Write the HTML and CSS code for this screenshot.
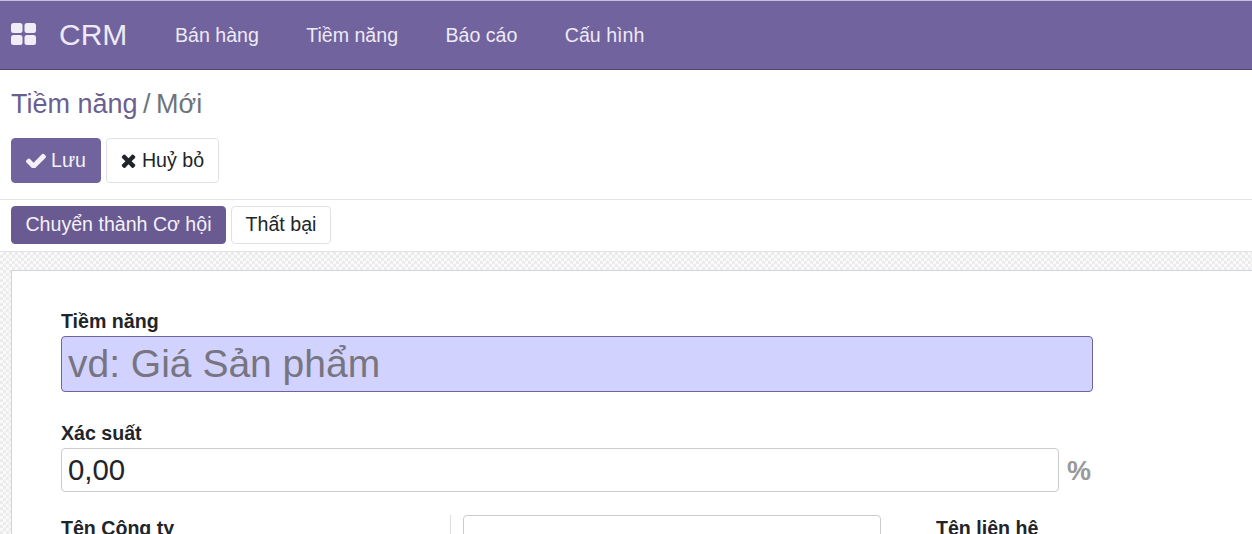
FILE: index.html
```html
<!DOCTYPE html>
<html lang="vi">
<head>
<meta charset="utf-8">
<title>CRM</title>
<link rel="stylesheet" href="styles.css">
</head>
<body>
<nav class="navbar">
  <svg class="apps-icon" viewBox="0 0 25 22" aria-hidden="true">
    <rect x="0" y="0" width="11.5" height="10" rx="2.5"/>
    <rect x="13.5" y="0" width="11.5" height="10" rx="2.5"/>
    <rect x="0" y="12" width="11.5" height="10" rx="2.5"/>
    <rect x="13.5" y="12" width="11.5" height="10" rx="2.5"/>
  </svg>
  <span class="brand">CRM</span>
  <ul class="menu">
    <li>Bán hàng</li>
    <li>Tiềm năng</li>
    <li>Báo cáo</li>
    <li>Cấu hình</li>
  </ul>
</nav>
<header class="control">
  <div class="breadcrumb"><span class="crumb-link">Tiềm năng</span><span class="crumb-sep">/</span><span class="crumb-active">Mới</span></div>
  <div class="actions">
    <button class="btn btn-save"><svg class="btn-icon" viewBox="128 280 1543 1150"><path d="M1671 566q0 40-28 68l-724 724-136 136q-28 28-68 28t-68-28l-136-136-362-362q-28-28-28-68t28-68l136-136q28-28 68-28t68 28l294 295 656-657q28-28 68-28t68 28l136 136q28 28 28 68z"/></svg>Lưu</button>
    <button class="btn btn-cancel"><svg class="btn-icon x-icon" viewBox="294 238 1196 1316"><path d="M1490 1322q0 40-28 68l-136 136q-28 28-68 28t-68-28l-294-294-294 294q-28 28-68 28t-68-28l-136-136q-28-28-28-68t28-68l294-294-294-294q-28-28-28-68t28-68l136-136q28-28 68-28t68 28l294 294 294-294q28-28 68-28t68 28l136 136q28 28 28 68t-28 68l-294 294 294 294q28 28 28 68z"/></svg>Huỷ bỏ</button>
  </div>
</header>
<div class="statusbar">
  <button class="btn btn-primary">Chuyển thành Cơ hội</button>
  <button class="btn btn-cancel btn-lost">Thất bại</button>
</div>
<main class="content">
  <section class="sheet">
    <label class="label">Tiềm năng</label>
    <input class="input input-title" type="text" placeholder="vd: Giá Sản phẩm">
    <label class="label label-prob">Xác suất</label>
    <div class="prob-row">
      <input class="input input-prob" type="text" value="0,00">
      <span class="percent">%</span>
    </div>
    <div class="columns">
      <div class="col-left"><label class="label">Tên Công ty</label></div>
      <div class="col-mid"><input class="input input-company" type="text"></div>
      <div class="col-right"><label class="label">Tên liên hệ</label></div>
    </div>
  </section>
</main>
</body>
</html>
```

FILE: styles.css
```css
* { box-sizing: border-box; }
html, body {
  margin: 0;
  height: 100%;
  overflow: hidden;
  background: #fff;
  font-family: "Liberation Sans", Arial, sans-serif;
  font-size: 19.6px;
  color: #212529;
}
.navbar {
  height: 70px;
  display: flex;
  align-items: center;
  padding-left: 11px;
  background: #71639e;
  border-top: 1px solid #c4bfd6;
  border-bottom: 1px solid #4f4570;
  color: #eeeaf5;
}
.apps-icon { width: 25px; height: 22px; fill: #f0edf6; margin-top: -3px; }
.brand { font-size: 30px; margin-left: 23px; margin-right: 47.6px; }
.menu { display: flex; gap: 47.4px; list-style: none; margin: 0; padding: 0; white-space: nowrap; }
.control { padding: 19px 11px 0; height: 130px; border-bottom: 1px solid #e3e3e3; }
.breadcrumb { font-size: 27px; line-height: 30px; display: flex; gap: 5.5px; }
.crumb-link { color: #6a5f90; }
.crumb-sep, .crumb-active { color: #6c757d; }
.actions { display: flex; gap: 5px; margin-top: 19px; }
.btn {
  font: inherit;
  border: 1px solid #dee2e6;
  border-radius: 4px;
  background: #fff;
  color: #212529;
  display: flex;
  align-items: center;
  justify-content: center;
  padding: 0;
  white-space: nowrap;
}
.btn-save { height: 45px; width: 90px; background: #71639e; border-color: #71639e; color: #f4f2f8; }
.actions .btn-cancel { height: 45px; width: 113px; padding-bottom: 1px; }
.actions .btn-save { padding-bottom: 1px; }
.btn-icon { width: 20px; height: 15px; fill: currentColor; margin-right: 5px; }
.x-icon { width: 15px; height: 15px; margin-right: 6px; }
.statusbar { height: 52px; display: flex; gap: 5px; padding: 6px 11px 0; border-bottom: 1px solid #e3e3e3; }
.statusbar .btn { height: 38px; padding-bottom: 2px; }
.btn-primary { width: 215px; background: #6a5a92; border-color: #6a5a92; color: #f4f2f8; }
.btn-lost { width: 100px; }
.content {
  height: 282px;
  padding: 18px 0 0 11px;
  overflow: hidden;
  background-color: #f9f9f9;
  background-image: repeating-conic-gradient(#ececec 0 25%, #f9f9f9 0 50%);
  background-size: 6px 6px;
}
.sheet {
  height: 400px;
  margin-right: -20px;
  padding: 38px 0 0 49px;
  background: #fff;
  border: 1px solid #ced4da;
}
.label { display: block; font-weight: 700; line-height: 24px; color: #212529; white-space: nowrap; }
.input {
  display: block;
  font-family: inherit;
  color: #212529;
  background: #fff;
  border: 1px solid #ccc;
  border-radius: 4px;
  padding: 0 6px;
  outline: none;
}
.input-title {
  width: 1032px;
  height: 56px;
  margin-top: 3px;
  font-size: 39px;
  background: #d2d2ff;
  border-color: #71639e;
}
.input-title::placeholder { color: #77757f; opacity: 1; }
.label-prob { margin-top: 29px; }
.prob-row { display: flex; align-items: center; margin-top: 3px; }
.input-prob { width: 998px; height: 44px; font-size: 29.4px; }
.percent { font-size: 27px; font-weight: 700; color: #999; margin-left: 8px; margin-top: 2px; }
.columns { display: flex; margin-top: 23px; }
.col-left { width: 390px; border-right: 1px solid #ddd; padding-top: 1px; height: 40px; }
.col-mid { width: 485px; padding-left: 12px; }
.input-company { width: 418px; height: 40px; }
.col-right { margin-top: 1px; }
```
